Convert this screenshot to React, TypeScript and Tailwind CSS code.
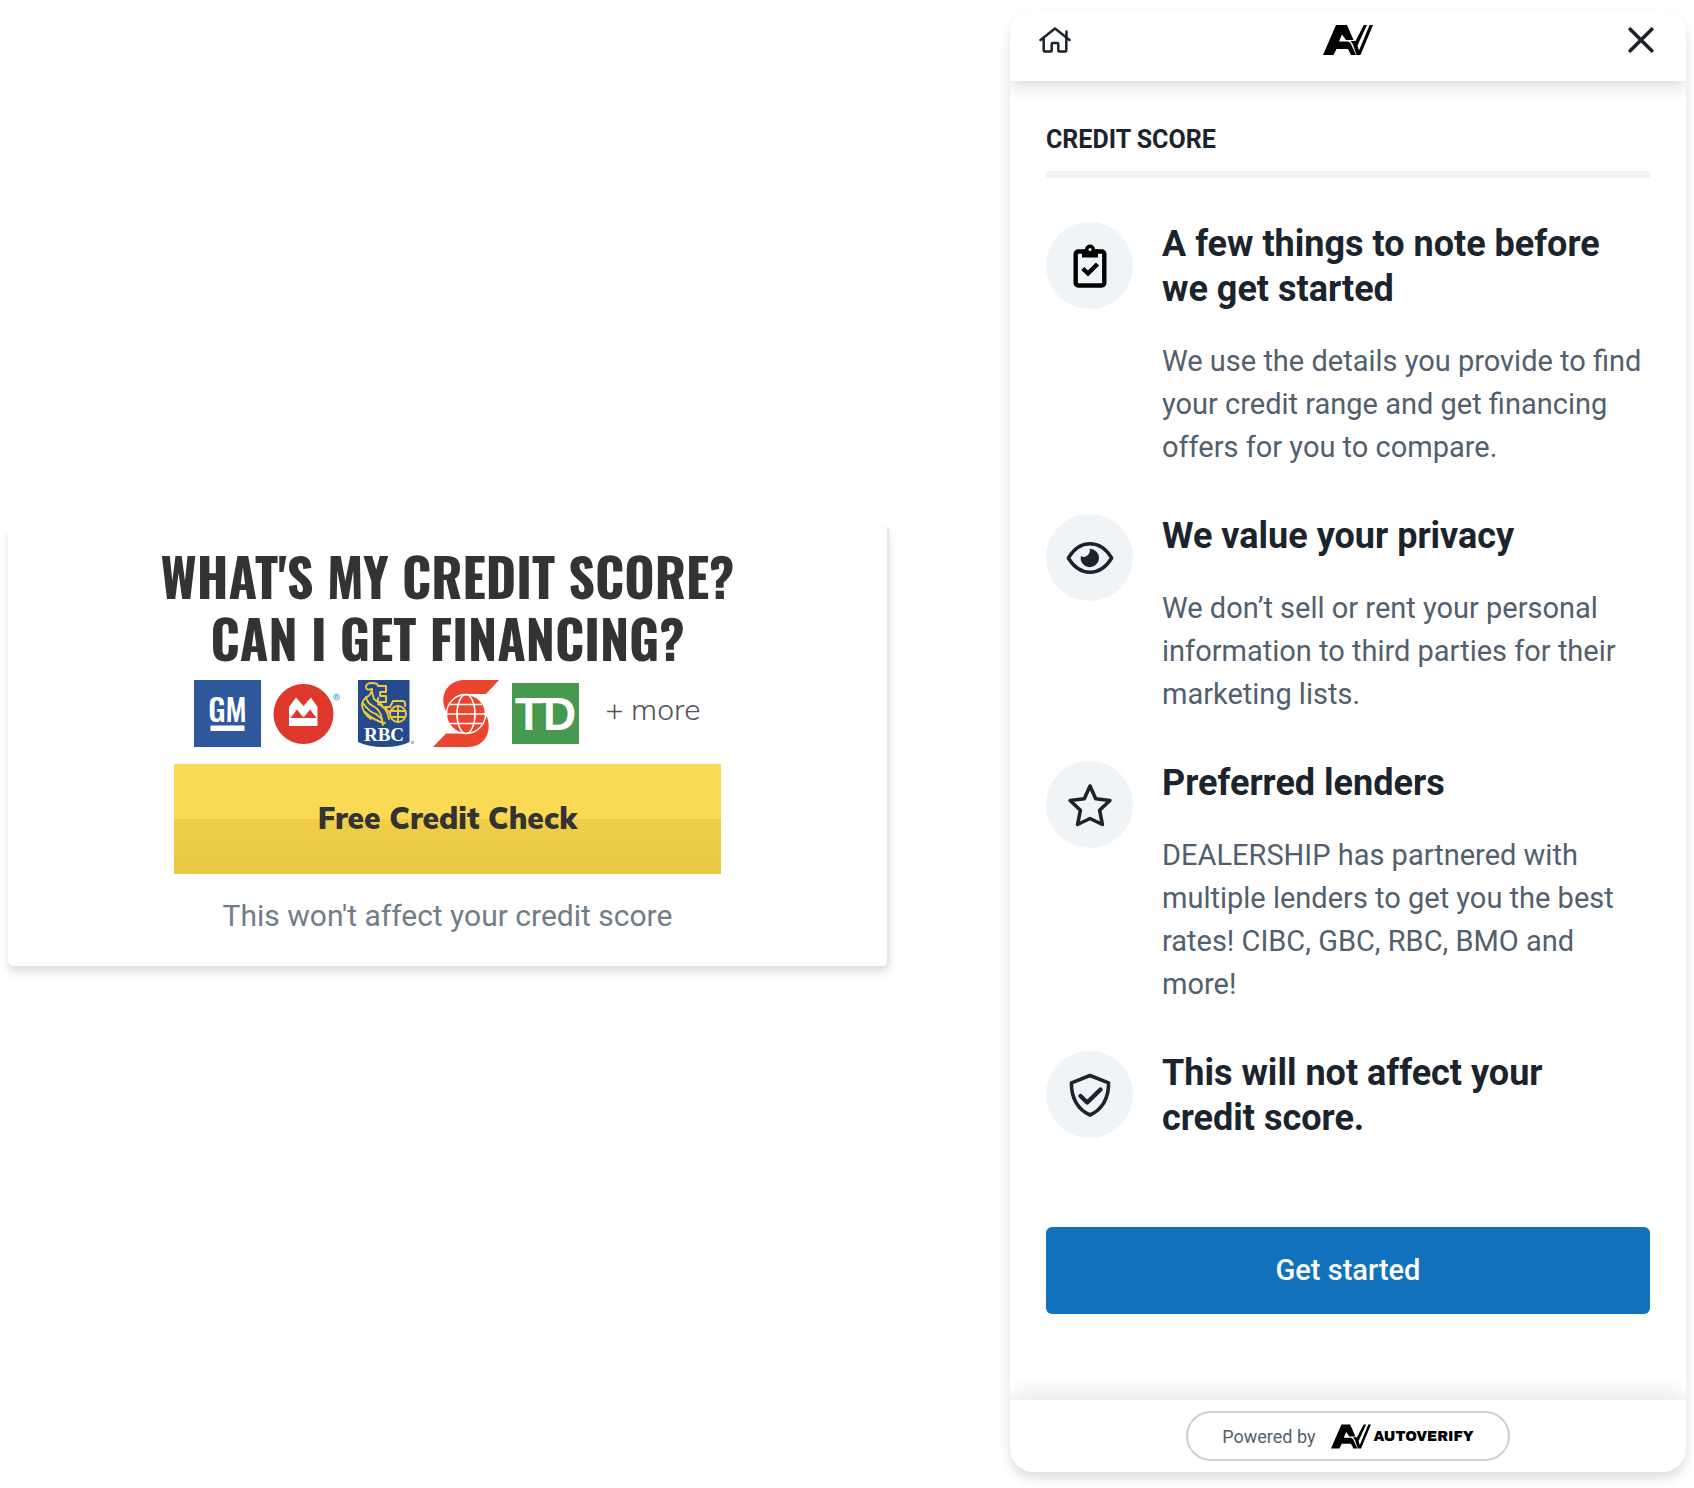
import { ReactNode } from "react";

const AvMark = ({ className }: { className: string }) => (
  <svg viewBox="0 0 50 30" className={className} aria-hidden="true">
    <path d="M0 30L13 0h11l6.500 15H23l-4-5.500-3 7h9l2.500 1.500L33 30h-5l-3-6H13.500L10.500 30z" fill="#000" />
    <path d="M27.500 16h5L40.800 0h3.200L34.500 20.500l1.500 5L46.600 0H50L37.500 30h-4L29.800 19z" fill="#000" />
  </svg>
);

const GmLogo = () => (
  <svg viewBox="0 0 67 67" className="h-[67px] w-[67px]" role="img" aria-label="GM">
    <rect width="67" height="67" fill="#2f579c" />
    <text x="33.500" y="42" textAnchor="middle" fontFamily="'Oswald', 'Roboto', sans-serif" fontWeight="500" fontSize="31" fill="#fff">GM</text>
    <rect x="16.500" y="45.500" width="34" height="5.500" fill="#fff" />
  </svg>
);

const BmoLogo = () => (
  <svg viewBox="0 0 68 67" className="h-[67px] w-[68px]" role="img" aria-label="BMO">
    <circle cx="30.500" cy="34" r="30" fill="#de382d" />
    <path d="M16 46V27l7-9.500 7.500 8.500 7.500-8.500 6.500 9.500v19z" fill="#fff" />
    <path d="M17.500 38l6.500-8.500 5.500 7 1 .500 1-.500 5.500-7 6.500 8.500z" fill="#de382d" />
    <circle cx="63.500" cy="17" r="3" fill="#d4e9f7" stroke="#8dbce0" strokeWidth="1" />
    <path d="M62.500 18.500v-3h2l-.500 1.500.500 1.500" fill="none" stroke="#6aa7d6" strokeWidth=".8" />
  </svg>
);

const RbcLogo = () => (
  <svg viewBox="0 0 57 67" className="h-[67px] w-[57px]" role="img" aria-label="RBC">
    <path d="M0 0h51.500v62Q42 67 26 67T0 62z" fill="#244a8b" />
    <g fill="none" stroke="#efc83d" strokeWidth="1.900" strokeLinecap="round" strokeLinejoin="round">
      <path d="M14 9q-6 2-6-2t6-4 6 3h8v6h-6v4h6v6h-8v-4" />
      <path d="M14 9q0 5-5 8t-5 8q1 9 9 14" />
      <path d="M8 17q1 6 7 9 8 4 9 14 0 3 1 5M5 23q6 9 13 11l6 5M14 12l2 7 8 6" />
      <path d="M7 32q9 9 20 11M20 24q9 3 11 15" />
      <path d="M27 27h5l3-6h10q3 1 2 5M27 27l4 5 4-2" />
      <circle cx="40" cy="34" r="8" />
      <path d="M40 26v16M33 31h14M33 37h14" />
    </g>
    <text x="26" y="61" textAnchor="middle" fontFamily="'Liberation Serif', serif" fontWeight="700" fontSize="19" fill="#fff">RBC</text>
    <circle cx="54.500" cy="62.500" r="1.800" fill="#a9bbd9" />
  </svg>
);

const ScotiaLogo = () => (
  <svg viewBox="0 0 66 67" className="h-[67px] w-[66px]" role="img" aria-label="Scotiabank">
    <path d="M66 0H32C18 0 9 10 10.500 23q.500 5 3 9l4-10Q23 14 33 14h20z" fill="#ec452f" />
    <path d="M0 67h35c15 0 22-12 20.500-24q-.500-4-2-7l-3 7Q45 53 33 53.500H13z" fill="#ec452f" />
    <circle cx="33" cy="34" r="19.500" fill="#ec452f" stroke="#fff" strokeWidth="1.400" />
    <g fill="none" stroke="#fff" strokeWidth="1.600">
      <ellipse cx="33" cy="34" rx="9" ry="19.500" />
      <path d="M17 24.500h32M13.500 34h39M17 43.500h32" />
    </g>
  </svg>
);

const TdLogo = () => (
  <svg viewBox="0 0 67 61" className="h-[61px] w-[67px]" role="img" aria-label="TD">
    <rect width="67" height="61" fill="#46994f" />
    <rect x="26" y="15" width="14" height="5" fill="#fff" />
    <text x="33.500" y="47" textAnchor="middle" fontFamily="'Liberation Sans', sans-serif" fontWeight="700" fontSize="46" fill="#fff">TD</text>
  </svg>
);

const HomeIcon = () => (
  <svg viewBox="0 0 32 26" className="h-[26px] w-8" fill="none" stroke="#1b242d" strokeWidth="2.500" strokeLinecap="round" strokeLinejoin="round" aria-hidden="true">
    <path d="M1.500 13L16 1.500 30.500 13M27.500 10V4.500M4.700 11.500v12q0 1 1 1h6q1 0 1-1V17q0-1 1-1h4.600q1 0 1 1v6.500q0 1 1 1h6q1 0 1-1v-12" />
  </svg>
);

const CloseIcon = () => (
  <svg viewBox="0 0 26 26" className="h-[26px] w-[26px]" fill="none" stroke="#1b242d" strokeWidth="3.600" strokeLinecap="round" aria-hidden="true">
    <path d="M2.200 2.200l21.600 21.600M23.800 2.200L2.200 23.800" />
  </svg>
);

const ClipboardIcon = () => (
  <svg viewBox="0 0 48 48" className="h-12 w-12" fill="none" aria-hidden="true">
    <rect x="9.700" y="9.500" width="28.600" height="34" rx="2.500" stroke="#000" strokeWidth="4.400" />
    <path d="M16 15.500V7.500h3a5 5 0 0110 0h3v8z" fill="#000" />
    <circle cx="24" cy="7.500" r="1.600" fill="#eff3f7" />
    <path d="M16.800 26.500l5.200 5 9.500-9.500" stroke="#000" strokeWidth="4.400" />
  </svg>
);

const EyeIcon = () => (
  <svg viewBox="0 0 48 48" className="h-12 w-12" fill="none" aria-hidden="true">
    <path d="M2.300 24Q11 9.800 24 9.800T45.700 24Q37 38.200 24 38.200T2.300 24z" stroke="#1b242d" strokeWidth="3.400" strokeLinejoin="round" />
    <path d="M23.500 14.800A9.200 9.200 0 1114.800 22q4 2 6.500-.500 3.500-3 2.200-6.700z" fill="#1b242d" />
  </svg>
);

const StarIcon = () => (
  <svg viewBox="0 0 48 48" className="h-12 w-12" fill="none" stroke="#1b242d" strokeWidth="3.600" strokeLinejoin="round" aria-hidden="true">
    <path d="M24 5l5.700 12.700 14.200 1.800-10.300 9.700 2.800 14.300L24 37.500l-12.400 6 2.800-14.300L4.100 19.500l14.200-1.800z" />
  </svg>
);

const ShieldIcon = () => (
  <svg viewBox="0 0 48 48" className="h-12 w-12" fill="none" stroke="#1b242d" strokeLinejoin="round" aria-hidden="true">
    <path d="M24 4.500l18.500 7.300C43 27 36 38.500 24 44 12 38.500 5 27 5.500 11.800z" strokeWidth="3.600" />
    <path d="M14.500 25l6.700 6.500L34.500 18.500" strokeWidth="4.400" strokeLinecap="round" />
  </svg>
);

type Note = {
  title: string;
  text?: string;
  icon: ReactNode;
};

const notes: Note[] = [
  {
    title: "A few things to note before we get started",
    text: "We use the details you provide to find your credit range and get financing offers for you to compare.",
    icon: <ClipboardIcon />,
  },
  {
    title: "We value your privacy",
    text: "We don’t sell or rent your personal information to third parties for their marketing lists.",
    icon: <EyeIcon />,
  },
  {
    title: "Preferred lenders",
    text: "DEALERSHIP has partnered with multiple lenders to get you the best rates! CIBC, GBC, RBC, BMO and more!",
    icon: <StarIcon />,
  },
  {
    title: "This will not affect your credit score.",
    icon: <ShieldIcon />,
  },
];

function CreditBanner() {
  return (
    <section className="flex flex-col items-center rounded-b-md border-r-2 border-[#e6e6e6] bg-white px-6 pt-[18px] pb-[29px] text-center shadow-[0_6px_8px_rgba(0,0,0,0.13)]">
      <h1 className="font-['Oswald','Roboto',sans-serif] text-[52px] leading-[62px] font-bold text-[#333]">
        WHAT'S MY CREDIT SCORE?
        <br />
        CAN I GET FINANCING?
      </h1>
      <div className="mt-[11px] flex items-center">
        <div className="flex items-center gap-3">
          <GmLogo />
          <BmoLogo />
        </div>
        <div className="ml-[17px] flex items-center gap-[18px]">
          <RbcLogo />
          <ScotiaLogo />
        </div>
        <div className="ml-[13px] flex items-center gap-[26px]">
          <TdLogo />
          <span className="pb-2 font-['Mulish','Open_Sans',sans-serif] text-[30px] leading-9 font-light text-[#555]">+ more</span>
        </div>
      </div>
      <button
        type="button"
        className="mt-[17px] h-[110px] w-full max-w-[547px] bg-linear-to-b from-[#fada55] from-50% via-[#f1ce48] via-50% to-[#ebc843] font-['Mulish','Open_Sans',sans-serif] text-[30px] font-black text-[#333]"
      >
        Free Credit Check
      </button>
      <p className="mt-5 text-[30px] leading-[43px] text-[#717d88]">This won't affect your credit score</p>
    </section>
  );
}

function NoteRow({ title, text, icon }: Note) {
  return (
    <li className="flex gap-[29px]">
      <div className="flex h-[87px] w-[87px] shrink-0 items-center justify-center rounded-full bg-[#f0f4f7]">{icon}</div>
      <div className="flex-1">
        <h3 className="pr-4 text-[36px] leading-[45px] font-bold text-[#1b242d]">{title}</h3>
        {text && <p className="mt-7 text-[29px] leading-[43px] text-[#52606d]">{text}</p>}
      </div>
    </li>
  );
}

function ScoreWidget() {
  return (
    <section className="flex flex-col overflow-hidden rounded-3xl bg-white shadow-[0_7px_12px_rgba(0,0,0,0.13)]">
      <header className="relative z-10 flex items-start justify-between bg-white px-[29px] pt-[15px] pb-[26px] shadow-[0_4px_16px_rgba(0,0,0,0.16)]">
        <button type="button" aria-label="Home" className="flex h-[30px] items-center"><HomeIcon /></button>
        <AvMark className="h-[30px] w-[50px]" />
        <button type="button" aria-label="Close" className="flex h-[30px] w-8 items-center justify-center"><CloseIcon /></button>
      </header>

      <div className="px-9 pt-[42px] pb-[86px]">
        <h2 className="border-b-[7px] border-[#f0f4f7] pb-3.5 text-[25px] leading-[34px] font-bold text-[#1b242d]">CREDIT SCORE</h2>
        <ul className="mt-11 space-y-[45px]">
          {notes.map((note) => (
            <NoteRow key={note.title} {...note} />
          ))}
        </ul>
        <button type="button" className="mt-[86px] h-[87px] w-full rounded-md bg-[#1271bc] text-[29px] font-medium text-white">
          Get started
        </button>
      </div>

      <footer className="flex justify-center bg-white py-[11px] shadow-[0_-6px_24px_rgba(0,0,0,0.1)]">
        <a href="#autoverify" className="flex h-[50px] w-[324px] items-center justify-center rounded-full border-2 border-[#c9d0dd]">
          <span className="text-[18px] text-[#52606d]">Powered by</span>
          <AvMark className="ml-4 h-[25px] w-10" />
          <span className="ml-0.5 font-['Archivo_Black','Inter',sans-serif] text-[14px] text-black">AUTOVERIFY</span>
        </a>
      </footer>
    </section>
  );
}

export default function App() {
  return (
    <main className="grid min-h-screen grid-cols-[881fr_676fr] items-start gap-[121px] bg-white px-2 pt-2.5 pb-4 font-['Roboto',sans-serif]">
      <div className="self-center pt-2.5">
        <CreditBanner />
      </div>
      <ScoreWidget />
    </main>
  );
}
